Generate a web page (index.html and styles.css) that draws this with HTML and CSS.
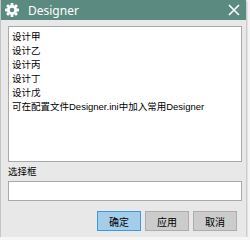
FILE: index.html
```html
<!DOCTYPE html>
<html lang="zh">
<head>
  <meta charset="UTF-8">
  <title>Designer</title>
  <link rel="stylesheet" href="styles.css">
</head>
<body>
  <div class="dialog">
    <!-- Title bar -->
    <div class="titlebar">
      <svg class="gear" width="14" height="14" viewBox="0 0 14 14">
        <g fill="#ffffff">
          <rect x="5.6" y="0" width="2.8" height="14" rx="0.6"/>
          <rect x="5.6" y="0" width="2.8" height="14" rx="0.6" transform="rotate(45 7 7)"/>
          <rect x="5.6" y="0" width="2.8" height="14" rx="0.6" transform="rotate(90 7 7)"/>
          <rect x="5.6" y="0" width="2.8" height="14" rx="0.6" transform="rotate(135 7 7)"/>
          <circle cx="7" cy="7" r="5"/>
        </g>
        <circle cx="7" cy="7" r="2.3" fill="#5b8a80"/>
      </svg>
      <span class="title">Designer</span>
      <svg class="close" width="12" height="12" viewBox="0 0 12 12">
        <path d="M1 1 L11 11 M11 1 L1 11" stroke="#ffffff" stroke-width="1.6"/>
      </svg>
    </div>
    <div class="content">
      <!-- List of designers -->
      <div class="listbox">
        <div class="item">设计甲</div>
        <div class="item">设计乙</div>
        <div class="item">设计丙</div>
        <div class="item">设计丁</div>
        <div class="item">设计戊</div>
        <div class="item">可在配置文件Designer.ini中加入常用Designer</div>
      </div>
      <div class="field-label">选择框</div>
      <div class="input-box"></div>
      <div class="buttons">
        <button type="button" class="btn primary">确定</button>
        <button type="button" class="btn">应用</button>
        <button type="button" class="btn">取消</button>
      </div>
    </div>
  </div>
</body>
</html>
```

FILE: styles.css
```css
/* Basic resets */
* { margin: 0; padding: 0; box-sizing: border-box; }
body {
  background: #f6f6f6;
  font-family: 'Liberation Sans', 'Noto Sans CJK SC', sans-serif;
  font-size: 9.5px;
  color: #000;
}
/* Dialog window */
.dialog {
  width: 246px;
  height: 237px;
  background: #e8e8e8;
  border-left: 1px solid #c4c4c4;
  box-shadow: 1px 1px 2px rgba(0,0,0,0.25);
  display: flex;
  flex-direction: column;
}
.titlebar {
  height: 20px;
  background: #5b8a80;
  display: flex;
  align-items: center;
  padding: 0 4px 0 4px;
  color: #fff;
}
.gear { margin-right: 9px; }
.title {
  font-family: 'Noto Sans', sans-serif;
  font-size: 12px;
  flex: 1;
}
.close { margin-right: 2px; }
.content {
  padding: 6px 4px 0 7px;
  display: flex;
  flex-direction: column;
}
/* List box */
.listbox {
  height: 136px;
  background: #fff;
  border: 1px solid #a9a9a9;
  padding: 3px 3px 1px;
}
.item {
  line-height: 14px;
  white-space: nowrap;
}
.field-label {
  line-height: 14px;
  margin-top: 3px;
}
.input-box {
  height: 20px;
  margin-top: 2px;
  background: #fff;
  border: 1px solid #a9a9a9;
}
/* Buttons */
.buttons {
  display: flex;
  justify-content: flex-end;
  gap: 4px;
  margin-top: 10px;
  padding-right: 5px;
}
.btn {
  width: 44px;
  height: 20px;
  font-family: 'Noto Sans CJK SC', sans-serif;
  font-size: 10px;
  background: #cccccc;
  border: 1px solid #adadad;
  color: #000;
}
.btn.primary {
  background: #a3cde9;
  border-color: #3d9ad8;
}
```
